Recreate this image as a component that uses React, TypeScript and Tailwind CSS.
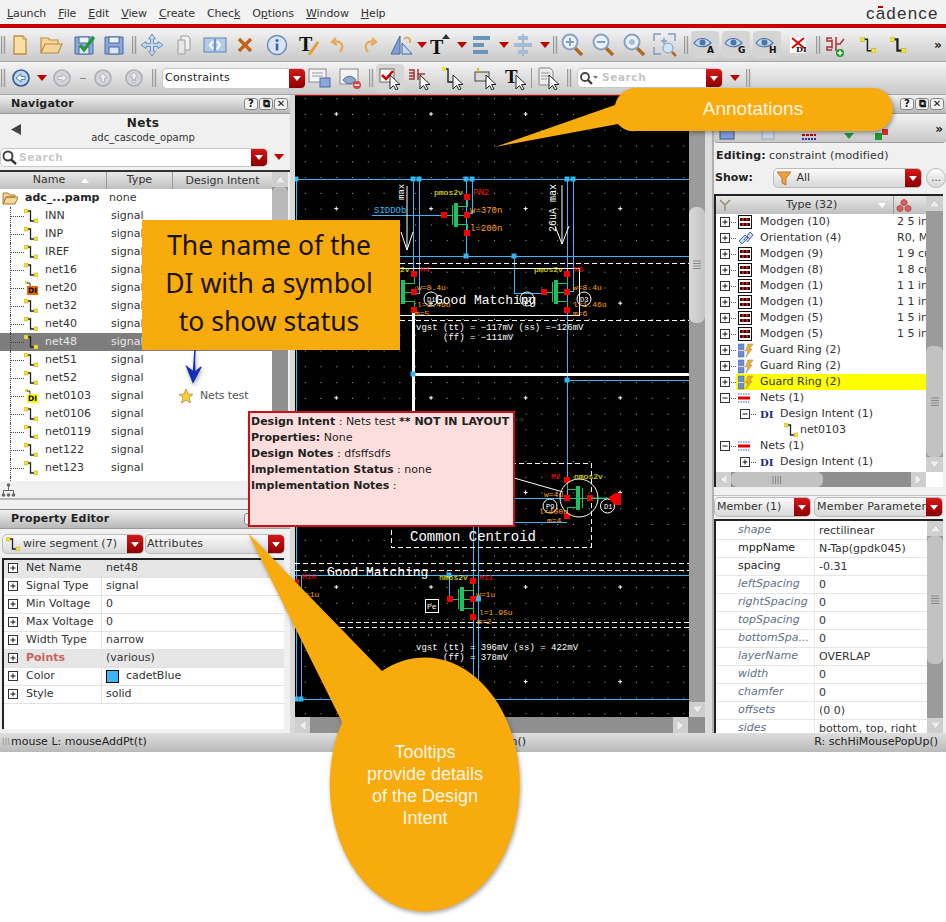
import React from "react";

const DJ = "font-['DejaVu_Sans',sans-serif]";

const Tri = ({ className = "" }: { className?: string }) => (
  <svg width="10" height="6" viewBox="0 0 10 6" className={className}><path d="M0 0H10L5 6Z" fill="#c00000" /></svg>
);

const Grip = () => (
  <svg width="6" height="20" viewBox="0 0 6 20"><path d="M0.5 1V19M3.5 1V19" stroke="#9a9a9a" strokeWidth="1.4" /></svg>
);

const Ic = ({ children }: { children: React.ReactNode }) => (
  <svg width="24" height="24" viewBox="0 0 24 24">{children}</svg>
);

const Floppy = () => (
  <>
    <path d="M3 4H21V21H3Z" fill="#8aa8dc" stroke="#4a6aa0" />
    <rect x="7" y="4" width="10" height="6" fill="#eef3fb" stroke="#4a6aa0" />
    <rect x="7" y="14" width="10" height="7" fill="#dfe7f5" stroke="#4a6aa0" />
  </>
);

const EyeI = ({ l }: { l: string }) => (
  <div className="w-[28px] h-[28px] rounded bg-[#d4d4d4] flex items-center justify-center">
    <svg width="24" height="20" viewBox="0 0 24 20">
      <path d="M1 8C5 2 13 2 18 8C13 13 5 13 1 8Z" fill="#c4d6ec" stroke="#4a76a8" strokeWidth="1.2" />
      <circle cx="9.500" cy="7.500" r="3" fill="#4a76a8" />
      <text x="14" y="18" fontSize="9" fontWeight="700" fontFamily="DejaVu Sans" fill="#111">{l}</text>
    </svg>
  </div>
);

const WireIc = ({ bold = false, size = 14 }: { bold?: boolean; size?: number }) => (
  <svg width={size} height={size} viewBox="0 0 14 14">
    <path d="M2 2H6.5V12H12" fill="none" stroke="#222" strokeWidth={bold ? 2 : 1.3} />
    <rect x="0" y="0" width="4" height="4" fill="#f0e040" stroke="#b5a820" strokeWidth=".5" />
    <rect x="10" y="10" width="4" height="4" fill="#f0e040" stroke="#b5a820" strokeWidth=".5" />
  </svg>
);

const Cursor = () => <path d="M12 9L12 23L15.5 19.5L18 24L20 23L17.5 18.5L22 18.5Z" fill="#fff" stroke="#222" />;

const Glass = ({ inner }: { inner: React.ReactNode }) => (
  <Ic>
    <path d="M15 15L22 22" stroke="#b06a20" strokeWidth="3.5" />
    <circle cx="10" cy="9" r="7.5" fill="#e8f0fa" stroke="#88a4c4" strokeWidth="2" />
    {inner}
  </Ic>
);

const items1: [number, React.ReactNode][] = [
  [4, <Grip />],
  [20, <Ic><path d="M6 3H15L18 6V21H6Z" fill="#f7dfa5" stroke="#c08a40" strokeWidth="1.3" /><path d="M15 3V6H18" fill="#fff3d0" stroke="#c08a40" /></Ic>],
  [51, <Ic><path d="M2 20V5H9L11 7H19V11H6L2 20L6 11H23L19 20Z" fill="#f3d69a" stroke="#c08a40" strokeWidth="1.2" /></Ic>],
  [84, <Ic><Floppy /><path d="M8 12L12 17L22 4" fill="none" stroke="#1d9a2e" strokeWidth="3" /></Ic>],
  [114, <Ic><Floppy /></Ic>],
  [135, <Grip />],
  [152, <Ic><path d="M12 1L15.5 6H13.5V10.5H18V8.5L23 12L18 15.5V13.5H13.5V18H15.5L12 23L8.500 18H10.5V13.5H6V15.5L1 12L6 8.500V10.500H10.5V6H8.5Z" fill="#c4d8ec" stroke="#6b94bc" /></Ic>],
  [184, <Ic><path d="M9 3H16L18 5V17H9Z" fill="#f2f2f2" stroke="#9a9a9a" /><path d="M6 7H13V21H6Z" fill="#e6e6e6" stroke="#9a9a9a" /></Ic>],
  [215, <Ic><rect x="1" y="5" width="22" height="14" fill="#b4cbe6" stroke="#5d86b4" /><path d="M10 8L7 12L10 16M14 8L17 12L14 16" fill="none" stroke="#fff" strokeWidth="2" /><path d="M12 6V18" stroke="#2f5f9a" strokeWidth="1" /></Ic>],
  [245, <Ic><path d="M6 6L18 18M18 6L6 18" stroke="#c2601c" strokeWidth="3.2" /></Ic>],
  [277, <Ic><circle cx="12" cy="12" r="9.500" fill="#d8e4f5" stroke="#6a8cc0" strokeWidth="1.5" /><circle cx="12" cy="7.500" r="1.500" fill="#3a63ad" /><path d="M12 10.500V17.500" stroke="#3a63ad" strokeWidth="2.600" /></Ic>],
  [309, <Ic><text x="2" y="18" fontFamily="Liberation Serif" fontWeight="700" fontSize="20" fill="#111">T</text><path d="M12 22L21 9" stroke="#e0a030" strokeWidth="3" /></Ic>],
  [339, <Ic><path d="M9 5L5 9L10 12M6 9C14 7 18 12 13 19" fill="none" stroke="#e8a95a" strokeWidth="2.400" /></Ic>],
  [369, <Ic><path d="M15 5L19 9L14 12M18 9C10 7 6 12 11 19" fill="none" stroke="#e8a95a" strokeWidth="2.400" /></Ic>],
  [402, <Ic><path d="M10 3V21H1Z" fill="#7f9fd8" stroke="#4a6aa0" /><path d="M12 21V10L22 21Z" fill="#c5d6ef" stroke="#4a6aa0" /><path d="M14 6C17 3 21 5 20 10" fill="none" stroke="#e8a95a" strokeWidth="2" /></Ic>],
  [422, <Tri />],
  [440, <Ic><text x="2" y="21" fontFamily="Liberation Serif" fontWeight="700" fontSize="20" fill="#111">T</text><path d="M14 6L18 1L22 6Z" fill="#333" /></Ic>],
  [462, <Tri />],
  [482, <Ic><path d="M3 5H20M3 12H14M3 19H18" stroke="#6b94bc" strokeWidth="4" /></Ic>],
  [504, <Tri />],
  [523, <Ic><path d="M12 1V23" stroke="#6b94bc" /><path d="M7 5H17M3 12H21M7 19H17" stroke="#a4bcd8" strokeWidth="4" /></Ic>],
  [545, <Tri />],
  [556, <Grip />],
  [572, <Glass inner={<path d="M6 9H14M10 5V13" stroke="#7aa0c8" strokeWidth="2" />} />],
  [603, <Glass inner={<path d="M6 9H14" stroke="#7aa0c8" strokeWidth="2" />} />],
  [634, <Glass inner={<circle cx="10" cy="9" r="3" fill="#a4c0e0" />} />],
  [665, <Ic><path d="M1 8V1H8M15 1H22V8M1 14V21H8" fill="none" stroke="#7f9fbf" strokeWidth="1.500" /><path d="M8 8H14M11 5V11" stroke="#7f9fbf" strokeWidth="1.500" /><circle cx="15" cy="15" r="5" fill="#cfe3f6" stroke="#7aa0c8" /><path d="M19 19L23 23" stroke="#b06a20" strokeWidth="2.500" /></Ic>],
  [687, <Grip />],
  [705, <EyeI l="A" />],
  [736, <EyeI l="G" />],
  [767, <EyeI l="H" />],
  [798, <svg width="16" height="16" viewBox="0 0 16 16"><rect width="16" height="16" fill="#fff" /><path d="M2 1L14 11M14 1L2 11" stroke="#e00000" strokeWidth="2" /><text x="6" y="15" fontSize="8" fontWeight="700" fontFamily="DejaVu Serif" fill="#111">DI</text></svg>],
  [819, <Grip />],
  [836, <Ic><path d="M8 5H3V8H8M8 17H3V14H8M8 6.500V15.500M12 4V18M12 11H16L20 6" fill="none" stroke="#a83030" strokeWidth="1.500" /><circle cx="16" cy="20" r="4" fill="#1d9a2e" /><path d="M13.500 20H18.500M16 17.500V22.500" stroke="#fff" strokeWidth="1.500" /></Ic>],
  [868, <WireIc size={16} />],
  [898, <WireIc size={16} bold />],
  [938, <span className="text-[12px] font-bold text-[#222] leading-none">»</span>],
];

const Back = ({ d, on }: { d: string; on?: boolean }) => (
  <Ic>
    <circle cx="12" cy="12" r="8" fill={on ? "#bcd4ee" : "#d4d4d8"} stroke={on ? "#2f5d94" : "#a8b0b8"} strokeWidth="1.6" />
    <path d={d} fill={on ? "#fff" : "#eee"} stroke={on ? "#5a84b0" : "#b8b8b8"} />
  </Ic>
);

const items2: [number, React.ReactNode][] = [
  [4, <Grip />],
  [21, <Back on d="M7 12L12 8V10.500H16V13.500H12V16Z" />],
  [42, <Tri />],
  [62, <Back d="M17 12L12 8V10.500H8V13.500H12V16Z" />],
  [83, <div className="w-[6px] h-px bg-[#888]" />],
  [103, <Back d="M12 7L16 12H13.500V16H10.500V12H8Z" />],
  [134, <Back d="M12 6L16 11H13.500V13.500H10.500V11H8ZM10.500 14.500H13.500V16.500H10.500Z" />],
  [155, <Grip />],
  [234, <div className="w-[144px] h-[21px] bg-white rounded-[5px] border border-[#c8c8c8] flex items-center justify-between overflow-hidden"><span className="pl-[2px] text-[11px] text-[#222] tracking-[.2px]">Constraints</span><DropBtn /></div>],
  [320, <Ic><rect x="1" y="3" width="17" height="13" fill="#f4f4f4" stroke="#888" /><path d="M4 7H15M4 10H15" stroke="#999" /><rect x="12" y="12" width="10" height="9" fill="#8aa8dc" stroke="#4a6aa0" /></Ic>],
  [351, <Ic><rect x="1" y="3" width="18" height="15" fill="#f4f4f4" stroke="#888" /><path d="M4 14C8 9 13 9 17 14C13 19 8 19 4 14Z" fill="#8fa8c8" stroke="#4a6aa0" /><circle cx="18" cy="19" r="4" fill="#d94040" /><path d="M15.500 19H20.500" stroke="#fff" strokeWidth="1.500" /></Ic>],
  [372, <Grip />],
  [390, <div className="w-[29px] h-[28px] rounded bg-[#d6d6d6] flex items-center justify-center"><Ic><rect x="2" y="3" width="14" height="13" fill="#fff" stroke="#666" /><path d="M4 9L8 13L15 5" fill="none" stroke="#d00000" strokeWidth="2.500" /><Cursor /></Ic></div>],
  [420, <Ic><path d="M1 4H6V7H1M1 13H6V10H1M6 5V12M10 3V14M10 8H17" fill="none" stroke="#a83030" strokeWidth="1.500" /><Cursor /></Ic>],
  [453, <Ic><path d="M3 3H7V16H12" fill="none" stroke="#222" strokeWidth="1.400" /><rect x="1" y="1" width="4" height="4" fill="#f0e040" /><Cursor /></Ic>],
  [486, <Ic><rect x="1" y="6" width="14" height="9" fill="#d8d8d8" stroke="#444" /><path d="M4 2V6" stroke="#d8c020" strokeWidth="2" /><Cursor /></Ic>],
  [516, <Ic><text x="1" y="17" fontFamily="Liberation Serif" fontWeight="700" fontSize="19" fill="#111">T</text><Cursor /></Ic>],
  [531, <div className="w-px h-[20px] bg-[#999]" />],
  [549, <Ic><path d="M2 2H13L16 5V19H2Z" fill="#ececec" stroke="#888" /><path d="M4 7H13M4 10H13M4 13H10" stroke="#999" /><Cursor /></Ic>],
  [570, <Grip />],
  [650, <div className="w-[146px] h-[20px] bg-white rounded-[5px] border border-[#c8c8c8] flex items-center overflow-hidden"><SearchGlass /><span className="text-[10.5px] font-bold tracking-[.6px] text-[#c4c4c4] flex-1">Search</span><DropBtn /></div>],
  [735, <Tri />],
  [749, <Grip />],
];

function DropBtn({ className = "w-[16px] h-full" }: { className?: string }) {
  return (
    <div className={`${className} shrink-0 rounded-r-[3px] bg-linear-to-b from-[#d81818] to-[#8c0000] flex items-center justify-center`}>
      <svg width="8" height="5" viewBox="0 0 8 5"><path d="M0 0H8L4 5Z" fill="#fff" /></svg>
    </div>
  );
}

function SearchGlass() {
  return (
    <svg width="22" height="15" viewBox="0 0 22 15" className="shrink-0 mr-[2px]">
      <circle cx="7" cy="6" r="4" fill="#fff" stroke="#444" strokeWidth="1.800" />
      <path d="M10 9L14 13" stroke="#333" strokeWidth="2.200" />
      <path d="M15 5H20L17.500 8Z" fill="#777" />
    </svg>
  );
}

function ToolRow({ items, h }: { items: [number, React.ReactNode][]; h: string }) {
  let right = 0;
  return (
    <div className={`${h} flex items-center bg-linear-to-b from-[#f4f4f4] to-[#c9c9c9] border-b border-[#a8a8a8]`}>
      {items.map(([c, el], i) => {
        const slot = c === 234 ? 146 : c === 650 ? 148 : 28;
        const left = c - slot / 2 - right;
        right = c + slot / 2;
        return (
          <div key={i} className="flex items-center justify-center shrink-0" style={{ width: slot, marginLeft: left }}>
            {el}
          </div>
        );
      })}
    </div>
  );
}

const MENUS: React.ReactNode[] = [
  <><u>L</u>aunch</>,
  <><u>F</u>ile</>,
  <><u>E</u>dit</>,
  <><u>V</u>iew</>,
  <><u>C</u>reate</>,
  <>Chec<u>k</u></>,
  <>O<u>p</u>tions</>,
  <><u>W</u>indow</>,
  <><u>H</u>elp</>,
];

const DockBtns = () => (
  <div className="flex gap-[1px]">
    {["?", "⧉", "✕"].map((c) => (
      <span key={c} className="w-[14px] h-[12px] rounded-[3px] border border-[#888] bg-[#f2f2f2] text-[10px] leading-[10px] font-bold text-center text-[#111]">{c}</span>
    ))}
  </div>
);

const Header = ({ title }: { title?: string }) => (
  <div className="h-[19px] flex items-center justify-between pl-[11px] pr-[2px] bg-linear-to-b from-[#f0f0f0] to-[#b8b8b8] border-b border-[#999] shrink-0">
    <span className="text-[11px] font-bold text-[#222] tracking-[.2px] pt-[1px]">{title}</span>
    <DockBtns />
  </div>
);

const NET_ROWS = ["INN","INP","IREF","net16","net20","net32","net40","net48","net51","net52","net0103","net0106","net0119","net122","net123"];

const DI = ({ color }: { color: string }) => (
  <span className={`${color} w-[11px] h-[9px] text-[7.5px] leading-[9px] font-bold text-center text-black absolute left-[3px] top-[5px]`}>DI</span>
);

const NetRow = ({ n }: { n: string }) => {
  const sel = n === "net48";
  return (
    <div className={`h-[18px] flex items-center ${sel ? "bg-[#7d7d7d] text-[#e8e8e8]" : "text-[#333]"}`}>
      <div className="ml-[10px] w-[14px] h-full border-l border-dotted border-[#444] flex items-center shrink-0">
        <div className="w-full border-t border-dotted border-[#444]" />
      </div>
      <div className="relative w-[14px] h-[14px] mr-[7px] shrink-0">
        {n === "net20" || n === "net0103" ? (
          <>
            <svg width="14" height="14" viewBox="0 0 14 14"><rect x="1" y="0" width="3" height="3" fill="#e6d840" /><path d="M3 2H6V6" stroke="#333" fill="none" /></svg>
            <DI color={n === "net20" ? "bg-[#ef6c00]" : "bg-[#ffff00]"} />
          </>
        ) : (
          <WireIc />
        )}
      </div>
      <span className="w-[66px] shrink-0">{n}</span>
      <span className="w-[62px] shrink-0">signal</span>
      {n === "net0103" && (
        <span className="flex items-center gap-[6px] ml-[5px]">
          <svg width="16" height="16" viewBox="0 0 16 16"><path d="M8 1L10 6L15 6.500L11 9.500L12.500 15L8 12L3.500 15L5 9.500L1 6.500L6 6Z" fill="#f8cf3a" stroke="#c89a4a" /></svg>
          <span className="text-[#555] tracking-[-.15px]">Nets test</span>
        </span>
      )}
    </div>
  );
};

const Plus = ({ minus = false }: { minus?: boolean }) => (
  <svg width="11" height="11" viewBox="0 0 11 11" className="shrink-0">
    <rect x=".5" y=".5" width="9" height="9" fill="#fff" stroke="#333" />
    <path d={minus ? "M2.500 5H7.500" : "M2.500 5H7.500M5 2.500V7.500"} stroke="#111" />
  </svg>
);

const Combo = ({ className, children }: { className: string; children: React.ReactNode }) => (
  <div className={`${className} h-[20px] rounded-[5px] border border-[#bbb] bg-linear-to-b from-[#fafafa] to-[#d8d8d8] flex items-center overflow-hidden text-[11px] text-[#333]`}>
    <div className="flex-1 min-w-0 flex items-center overflow-hidden whitespace-nowrap">{children}</div>
    <DropBtn />
  </div>
);

const PE_ROWS: [string, string][] = [
  ["Net Name", "net48"], ["Signal Type", "signal"], ["Min Voltage", "0"], ["Max Voltage", "0"],
  ["Width Type", "narrow"], ["Points", "(various)"], ["Color", "cadetBlue"], ["Style", "solid"],
];

function ScrollBtn({ up }: { up?: boolean }) {
  return (
    <div className="h-[15px] bg-[#cfcfcf] flex items-center justify-center shrink-0">
      <svg width="11" height="7" viewBox="0 0 11 7"><path d={up ? "M0 7H11L5.500 0Z" : "M0 0H11L5.500 7Z"} fill="#ececec" stroke="#aaa" strokeWidth=".5" /></svg>
    </div>
  );
}

const Grips = ({ v = false }: { v?: boolean }) => (
  <svg width="10" height="10" viewBox="0 0 10 10"><path d={v ? "M1 1V9M3.500 1V9M6 1V9M8.500 1V9" : "M1 1H9M1 3.500H9M1 6H9M1 8.500H9"} stroke="#8a8a8a" /></svg>
);

function LeftPanel() {
  return (
    <div className="w-[290px] h-full flex flex-col bg-[#f0f0f0] shrink-0">
      <Header title="Navigator" />
      <div className="relative h-[33px] shrink-0 flex flex-col items-center justify-start pr-[4px] pt-[2px]">
        <span className="text-[12px] font-bold leading-[15px] text-[#222] tracking-[.3px]">Nets</span>
        <span className="text-[10px] leading-[13px] text-[#333]">adc_cascode_opamp</span>
        <svg width="10" height="11" viewBox="0 0 10 11" className="absolute left-[11px] top-[10px]"><path d="M10 0V11L0 5.500Z" fill="#444" /></svg>
      </div>
      <div className="h-[23px] shrink-0 flex items-start gap-[6px] pt-[1px]">
        <div className="w-[268px] h-[19px] bg-white rounded-[5px] border border-[#c8c8c8] flex items-center overflow-hidden">
          <svg width="17" height="15" viewBox="0 0 17 15" className="shrink-0"><circle cx="7" cy="6" r="4.500" fill="#fff" stroke="#444" strokeWidth="2" /><path d="M10 9.500L15 14" stroke="#333" strokeWidth="2.400" /></svg>
          <span className="text-[10.5px] font-bold tracking-[.6px] text-[#c8c8c8] flex-1 pl-[1px]">Search</span>
          <DropBtn />
        </div>
        <Tri className="mt-[6px]" />
      </div>
      <div className="flex h-[311px] shrink-0 border-t-2 border-[#333]">
        <div className="w-[272px] flex flex-col bg-white text-[11px]">
          <div className="h-[17px] shrink-0 flex items-center bg-linear-to-b from-[#e8e8e8] to-[#c0c0c0] text-[#333]">
            <div className="w-[107px] flex items-center justify-center gap-[16px] pl-[16px] pb-[1px] border-r border-[#999] h-full"><span>Name</span><svg width="8" height="5" viewBox="0 0 8 5"><path d="M0 5H8L4 0Z" fill="#fff" /></svg></div>
            <div className="w-[66px] text-center border-r border-[#999] h-full leading-[15px]">Type</div>
            <div className="flex-1 text-center leading-[15px]">Design Intent</div>
          </div>
          <div className="h-[18px] shrink-0 flex items-center">
            <svg width="16" height="14" viewBox="0 0 16 14" className="ml-[2px] mr-[7px]"><path d="M1 13V2H6L7.500 4H13V6H4L1 13L4 6H16L13 13Z" fill="#f3d69a" stroke="#b5772c" /></svg>
            <span className="font-bold text-[#222] w-[84px]">adc_...pamp</span>
            <span className="text-[#333]">none</span>
          </div>
          <div className="flex-1 overflow-hidden">
            {NET_ROWS.map((n) => <NetRow key={n} n={n} />)}
            <div className="h-[18px] ml-[10px] border-l border-dotted border-[#444]" />
          </div>
        </div>
        <div className="w-[16px] flex flex-col bg-[#8f8f8f]">
          <ScrollBtn up />
          <div className="h-[80px] rounded-[5px] bg-[#b9b9b9]" />
        </div>
      </div>
      <div className="h-[19px] shrink-0 flex items-center pl-[1px] border-b-2 border-[#b8b8b8]">
        <svg width="15" height="14" viewBox="0 0 15 14"><circle cx="7.500" cy="2" r="1.800" fill="#666" /><path d="M7.500 3V8M2.500 11V7.500H12.500V11" fill="none" stroke="#666" /><circle cx="2.500" cy="12" r="1.800" fill="#666" /><circle cx="7.500" cy="12" r="1.800" fill="#666" /><circle cx="12.500" cy="12" r="1.800" fill="#666" /></svg>
      </div>
      <div className="h-[10px] shrink-0 border-b border-[#888]" />
      <Header title="Property Editor" />
      <div className="h-[27px] shrink-0 flex items-center gap-[1px] pl-[2px] pt-[3px]">
        <Combo className="w-[142px]"><span className="pl-[3px] pr-[3px] shrink-0"><WireIc /></span><span>wire segment (7)</span></Combo>
        <Combo className="w-[140px]"><span className="pl-[1px] tracking-[.2px]">Attributes</span></Combo>
      </div>
      <div className="ml-[2px] mr-[6px] mt-[2px] h-[171px] shrink-0 border-t-2 border-l-2 border-[#222] bg-white text-[11px] text-[#333]">
        {PE_ROWS.map(([k, v]) => (
          <div key={k} className={`h-[18px] flex items-center border-b border-[#e2e2e2] ${k === "Net Name" || k === "Points" ? "bg-[#e6e6e6]" : ""}`}>
            <span className="w-[22px] pl-[4px] shrink-0"><Plus /></span>
            <span className={`w-[75px] shrink-0 ${k === "Points" ? "font-bold text-[#c8625a]" : ""}`}>{k}</span>
            <span className="h-full border-l border-[#e2e2e2] pl-[4px] flex items-center gap-[7px]">
              {k === "Color" && <span className="w-[13px] h-[13px] bg-[#38b8f8] border border-black" />}
              {v}
            </span>
          </div>
        ))}
      </div>
    </div>
  );
}

const Node = ({ x, y, c = "red" }: { x: number; y: number; c?: string }) =>
  c === "red" ? <rect x={x - 3} y={y - 3} width="6" height="6" fill="#f00000" /> : <rect x={x - 2.500} y={y - 2.500} width="5" height="5" fill="#38b4f0" />;

const Mos = ({ cx, cy, flip = false, gate = true }: { cx: number; cy: number; flip?: boolean; gate?: boolean }) => {
  const s = flip ? -1 : 1;
  const X = (d: number) => cx + s * d;
  return (
    <g shapeRendering="crispEdges">
      <path d={`M${X(-23)} ${cy}H${X(-15)}M${X(-15)} ${cy - 10}V${cy + 10}M${X(-9)} ${cy}H${cx}M${X(-9)} ${cy - 9}H${cx}V${cy - 18}M${X(-9)} ${cy + 9}H${cx}V${cy + 18}`} stroke="#1fc060" strokeWidth="1" fill="none" />
      <rect x={Math.min(X(-13), X(-9))} y={cy - 12} width="4" height="24" fill="#1fc060" />
      <Node x={cx} y={cy - 18} />
      <Node x={cx} y={cy} />
      <Node x={cx} y={cy + 18} />
      {gate && <Node x={X(-23)} y={cy} />}
    </g>
  );
};

const T = ({ x, y, c = "#ffa020", s = 8, children, w = 400 }: { x: number; y: number; c?: string; s?: number; children: React.ReactNode; w?: number }) => (
  <text x={x} y={y} fill={c} fontSize={s} fontWeight={w} fontFamily="Liberation Mono, monospace">{children}</text>
);

function Schematic() {
  const blue = "#38b8f8";
  const crossX = [336.3, 431, 525.6, 620.2];
  const crossY = [114, 208.600, 303.200, 397.800, 492.400, 587, 681.600];
  return (
    <svg viewBox="295 96 394 621" width="394" height="621" className="block">
      <defs>
        <pattern id="dots" x="336.3" y="114" width="15.77" height="15.77" patternUnits="userSpaceOnUse">
          <rect x="0" y="0" width="1" height="1" fill="#b0b0b0" />
        </pattern>
      </defs>
      <rect x="295" y="96" width="394" height="621" fill="#000" />
      <rect x="295" y="96" width="394" height="621" fill="url(#dots)" />
      {crossX.map((x) => crossY.map((y) => <path key={`${x}${y}`} d={`M${x - 2} ${y}H${x + 2}M${x} ${y - 2}V${y + 2}`} stroke="#fff" />))}

      <g shapeRendering="crispEdges">
        <path d="M295 179H689M296 179V700M413 179V275M419 179V293H414M466 179V256M472 179V213H468M567 179V500M573 179V291H568M400 256H689M514 256V293H544M567 380H689M295 575H689M301 575V699M295 699H689M473 411V690M478 411V690M449 575V599M514 498H612M514 522H567M372 215H443" fill="none" stroke={blue} strokeWidth="1" />
        <path d="M400 263H689M400 320H689M295 563H689M295 570H689M340 622H689M340 627H689" stroke="#fff" strokeDasharray="5 3" fill="none" />
        <path d="M400 268H579V315H400" stroke="#fff" fill="none" />
        <path d="M413 312V411M413 374.500H689" stroke="#fff" strokeWidth="3" fill="none" />
        <rect x="391" y="463" width="200" height="84" fill="none" stroke="#fff" strokeDasharray="5 3" />
      </g>
      <path d="M514 478L563 492" stroke="#fff" />

      {[[296,179],[413,179],[419,179],[466,179],[472,179],[567,179],[573,179],[466,256],[514,256],[413,374],[567,380],[449,575],[296,699],[301,699],[478.500,599]].map(([x,y]) => <Node key={`${x}-${y}`} x={x} y={y} c="blue" />)}

      <Mos cx={467} cy={215} />
      <Mos cx={414} cy={292} />
      <Mos cx={567} cy={292} />
      <Mos cx={567} cy={498} flip />
      <Mos cx={473} cy={599} />
      <Node x={296} y={582} />
      <circle cx="579" cy="498" r="19" fill="none" stroke="#fff" />
      <circle cx="607.500" cy="506" r="7" fill="none" stroke="#fff" />
      <circle cx="550" cy="506" r="7" fill="none" stroke="#fff" />
      <circle cx="431" cy="299" r="7" fill="none" stroke="#fff" />
      <circle cx="527" cy="299" r="7" fill="none" stroke="#fff" />
      <circle cx="584" cy="299" r="7" fill="none" stroke="#fff" />
      <path d="M608 498L615 493H621V505H615Z" fill="#f00000" />
      <path d="M591 498H608" stroke="#1fc060" />
      <T x={546} y={509} c="#fff" s={7}>P9</T>
      <T x={604} y={509} c="#fff" s={7}>D1</T>
      <T x={427} y={302} c="#fff" s={7}>D1</T>
      <T x={523} y={302} c="#fff" s={7}>D2</T>
      <T x={580} y={302} c="#fff" s={7}>D3</T>

      <path d="M407 186V250M401 232L407 250L413 232M562 185V244M555 226L562 244L569 226" fill="none" stroke="#fff" />
      <text x="0" y="0" transform="translate(404 200) rotate(-90)" fill="#fff" fontSize="9" fontFamily="Liberation Mono, monospace">max</text>
      <text x="0" y="0" transform="translate(556 232) rotate(-90)" fill="#fff" fontSize="10" fontFamily="Liberation Mono, monospace">26uA max</text>

      <T x={374} y={213} c={blue} s={9}>SIDDOb</T>
      <T x={434} y={195} c="#ffff00">pmos2v</T>
      <T x={473} y={195} c="#ff1010" s={9}>PN2</T>
      <T x={470} y={213} s={9}>w=370n</T>
      <T x={470} y={231} s={9}>l=200n</T>
      <T x={400} y={272} c="#ffff00">2v</T>
      <T x={420} y={272} c="#ff1010">M4</T>
      <T x={417} y={290}>w=8.4u</T>
      <T x={417} y={307}>l=1.46u</T>
      <T x={415} y={316}>m=5</T>
      <T x={534} y={272} c="#ffff00">pmos2v</T>
      <T x={574} y={272} c="#ff1010">M5</T>
      <T x={573} y={290}>w=8.4u</T>
      <T x={573} y={307}>l=1.46u</T>
      <T x={573} y={316}>m=6</T>
      <T x={551} y={479} c="#ff1010">M2</T>
      <T x={574} y={479} c="#ffff00">nmos2v</T>
      <T x={544} y={497}>w=4u</T>
      <T x={539} y={514}>l=400n</T>
      <T x={547} y={523}>m=4</T>
      <T x={439} y={580} c="#ffff00">nmos2v</T>
      <T x={479} y={580} c="#ff1010">M11</T>
      <T x={476} y={597}>w=1u</T>
      <T x={479} y={615}>l=1.95u</T>
      <T x={477} y={624}>m=2</T>
      <T x={302} y={579} c="#ff1010">M10</T>
      <T x={305} y={597}>=1u</T>

      <T x={435} y={304} c="#fff" s={13}>Good Matching</T>
      <T x={410} y={541} c="#fff" s={14}>Common Centroid</T>
      <T x={327} y={576} c="#fff" s={13}>Good Matching</T>
      <T x={416} y={330} c="#fff" s={9}>vgst (tt) = −117mV (ss) =−126mV</T>
      <T x={443} y={340} c="#fff" s={9}>(ff) = −111mV</T>
      <T x={416} y={650} c="#fff" s={9}>vgst (tt) = 396mV (ss) = 422mV</T>
      <T x={443} y={660} c="#fff" s={9}>(ff) = 378mV</T>
      <rect x="425.500" y="599.500" width="13" height="13" fill="none" stroke="#fff" />
      <T x={427} y={609} c="#fff" s={8}>Pe</T>
    </svg>
  );
}

function CanvasArea() {
  return (
    <div className="w-[410px] h-full shrink-0 flex flex-col">
      <div className="h-[1px] bg-[#c00000] shrink-0" />
      <div className="flex-1 flex min-h-0">
        <Schematic />
        <div className="w-[16px] flex flex-col bg-[#9b9b9b]">
          <div className="h-[111px] shrink-0" />
          <div className="h-[116px] rounded-[7px] bg-linear-to-r from-[#d8d8d8] to-[#c4c4c4] flex items-center justify-center shrink-0"><Grips /></div>
          <div className="flex-1" />
          <ScrollBtn />
        </div>
      </div>
      <div className="h-[16px] shrink-0 flex bg-[#8f8f8f]">
        <div className="w-[15px] bg-[#cfcfcf] flex items-center justify-center"><svg width="7" height="11" viewBox="0 0 7 11"><path d="M7 0V11L0 5.500Z" fill="#eee" stroke="#aaa" strokeWidth=".5" /></svg></div>
        <div className="flex-1" />
        <div className="w-[15px] mr-[17px] bg-[#cfcfcf] flex items-center justify-center"><svg width="7" height="11" viewBox="0 0 7 11"><path d="M0 0V11L7 5.500Z" fill="#eee" stroke="#aaa" strokeWidth=".5" /></svg></div>
      </div>
    </div>
  );
}

const MG = () => (
  <svg width="14" height="14" viewBox="0 0 14 14" className="shrink-0" shapeRendering="crispEdges">
    <rect x=".5" y=".5" width="13" height="13" fill="#fff" stroke="#111" />
    <rect x="2" y="3" width="10" height="3" fill="#111" />
    <rect x="2" y="8" width="10" height="3" fill="#111" />
    <rect x="4" y="3" width="2" height="3" fill="#e01010" />
    <rect x="8" y="3" width="2" height="3" fill="#e01010" />
    <rect x="4" y="8" width="2" height="3" fill="#e01010" />
    <rect x="8" y="8" width="2" height="3" fill="#e01010" />
  </svg>
);
const Orient = () => (
  <svg width="16" height="14" viewBox="0 0 16 14" className="shrink-0"><path d="M1 10L7 4L10 7L4 13ZM6 9L12 1L15 4L9 11" fill="#c8d8f0" stroke="#4468b8" /><path d="M9 5L12 8" stroke="#d03030" /></svg>
);
const GR = () => (
  <svg width="15" height="15" viewBox="0 0 15 15" className="shrink-0"><rect x="0" y="1" width="6" height="13" fill="#6f8ecb" stroke="#3c5a9a" strokeWidth=".5" /><path d="M0 7.500H6" stroke="#dde" /><path d="M10 1H15L11.500 6H14L8 14L10 8H7.500Z" fill="#e8b040" stroke="#a87820" strokeWidth=".5" /></svg>
);
const NetsI = ({ c }: { c: string }) => (
  <svg width="12" height="10" viewBox="0 0 12 10" className="shrink-0"><path d="M0 1H12M0 9H12" stroke="#3050d0" strokeDasharray="1.500 1" /><rect y="3.500" width="12" height="3" fill={c} /></svg>
);
const DII = () => <span className="font-['DejaVu_Serif',serif] font-bold text-[10px] text-[#1c2a80] w-[14px] shrink-0">DI</span>;

const TREE: { icon: React.ReactNode; t: string; v?: string; sel?: boolean; indent?: number; minus?: boolean; noPlus?: boolean }[] = [
  { icon: <MG />, t: "Modgen (10)", v: "2 5 int" },
  { icon: <Orient />, t: "Orientation (4)", v: "R0, M" },
  { icon: <MG />, t: "Modgen (9)", v: "1 9 cu" },
  { icon: <MG />, t: "Modgen (8)", v: "1 8 cu" },
  { icon: <MG />, t: "Modgen (1)", v: "1 1 int" },
  { icon: <MG />, t: "Modgen (1)", v: "1 1 int" },
  { icon: <MG />, t: "Modgen (5)", v: "1 5 int" },
  { icon: <MG />, t: "Modgen (5)", v: "1 5 int" },
  { icon: <GR />, t: "Guard Ring (2)" },
  { icon: <GR />, t: "Guard Ring (2)" },
  { icon: <GR />, t: "Guard Ring (2)", sel: true },
  { icon: <NetsI c="#e00000" />, t: "Nets (1)", minus: true },
  { icon: <DII />, t: "Design Intent (1)", indent: 1, minus: true },
  { icon: <WireIc />, t: "net0103", indent: 2, noPlus: true },
  { icon: <NetsI c="#e00000" />, t: "Nets (1)", minus: true },
  { icon: <DII />, t: "Design Intent (1)", indent: 1 },
];

const MP: [string, string, boolean][] = [
  ["shape", "rectilinear", true], ["mppName", "N-Tap(gpdk045)", false], ["spacing", "-0.31", false],
  ["leftSpacing", "0", true], ["rightSpacing", "0", true], ["topSpacing", "0", true], ["bottomSpa...", "0", true],
  ["layerName", "OVERLAP", true], ["width", "0", true], ["chamfer", "0", true], ["offsets", "(0 0)", true], ["sides", "bottom, top, right", true],
];

function RightPanel() {
  return (
    <div className="w-[234px] h-full shrink-0 flex flex-col border-l-2 border-[#b0b0b0] ml-[-2px] bg-[#f0f0f0] relative">
      <Header />
      <div className="h-[29px] shrink-0 flex items-center bg-linear-to-b from-[#f2f2f2] to-[#c8c8c8] border-b border-[#a0a0a0] rounded-b-[4px] relative">
        <svg width="226" height="29" viewBox="0 0 226 29" className="absolute left-0 top-0">
          <rect x="6" y="15" width="14" height="10" fill="#7f9fd8" stroke="#33558f" />
          <rect x="48" y="16" width="12" height="9" fill="#c8d6ea" stroke="#9ab" />
          <path d="M88 21H102" stroke="#c00000" strokeWidth="2" strokeDasharray="3 1" />
          <path d="M88 25H102" stroke="#3030c0" strokeWidth="2" strokeDasharray="2 1" />
          <path d="M130 19H140L135 25Z" fill="#1d9a2e" />
          <rect x="161" y="19" width="7" height="7" fill="#1d9a2e" />
          <rect x="168" y="15" width="6" height="6" fill="#d03030" />
        </svg>
        <span className="absolute right-[3px] top-[9px] text-[12px] font-bold leading-none text-[#222]">»</span>
      </div>
      <div className="h-[23px] shrink-0 flex items-end pl-[2px] text-[11px] text-[#333] tracking-[.2px] pb-[2px]"><b className="mr-[3px] text-[#222]">Editing:</b> constraint (modified)</div>
      <div className="h-[24px] shrink-0 flex items-center pl-[1px] text-[11px]">
        <b className="w-[59px] text-[#222]">Show:</b>
        <Combo className="w-[150px]">
          <svg width="14" height="15" viewBox="0 0 14 15" className="mx-[3px] shrink-0"><path d="M0 1H14L9 7V14L5 12V7Z" fill="#f0a040" stroke="#c07828" /></svg>
          <span className="pl-[2px]">All</span>
        </Combo>
        <span className="ml-[4px] w-[20px] h-[20px] rounded-full border border-[#bbb] bg-linear-to-b from-[#fafafa] to-[#d8d8d8] text-[10px] leading-[18px] text-center text-[#444]">...</span>
      </div>
      <div className="mr-[3px] mt-[4px] h-[293px] shrink-0 border-t-2 border-l-2 border-[#222] flex flex-col bg-white">
        <div className="flex flex-1 min-h-0">
          <div className="w-[210px] flex flex-col overflow-hidden text-[11px] text-[#333]">
            <div className="h-[18px] shrink-0 flex items-center bg-linear-to-b from-[#e8e8e8] to-[#c0c0c0]">
              <div className="w-[178px] h-full flex items-center border-r border-[#999] relative">
                <svg width="12" height="12" viewBox="0 0 12 12" className="absolute left-[3px] top-[3px]"><path d="M1 1L6 6L11 1M6 6V12" fill="none" stroke="#9a8a68" strokeWidth="1.500" /></svg>
                <span className="absolute left-[70px]">Type (32)</span>
                <svg width="8" height="5" viewBox="0 0 8 5" className="absolute right-[7px] top-[7px]"><path d="M0 0H8L4 5Z" fill="#fff" /></svg>
              </div>
              <svg width="16" height="14" viewBox="0 0 16 14" className="ml-[2px]"><path d="M8 1L11 3V6L8 8L5 6V3ZM4 7L7 9V12L4 14L1 12V9ZM12 7L15 9V12L12 14L9 12V9Z" fill="#d06060" stroke="#a83838" strokeWidth=".6" /></svg>
            </div>
            {TREE.map((r, i) => (
              <div key={i} className="h-[16px] shrink-0 flex items-center relative">
                <div className="w-[4px] shrink-0" />
                {r.indent === 2 ? <div className="w-[62px] shrink-0" /> : r.indent === 1 ? (
                  <div className="w-[20px] shrink-0" />
                ) : null}
                {!r.noPlus && <Plus minus={r.minus} />}
                {r.noPlus ? null : <div className="w-[5px] border-t border-dotted border-[#555] shrink-0" />}
                <div className={`flex-1 flex items-center h-full min-w-0 ${r.sel ? "bg-[#ffff00]" : ""}`}>
                  <span className={`flex items-center h-full shrink-0 ${r.indent === 1 ? "w-[24px] pl-[4px]" : r.indent === 2 ? "w-[18px] pl-[2px]" : "w-[24px] pl-[2px]"}`}>{r.icon}</span>
                  <span className="whitespace-nowrap w-[137px] shrink-0">{r.t}</span>
                  {r.v && <span className="whitespace-nowrap">{r.v}</span>}
                </div>
              </div>
            ))}
          </div>
          <div className="w-[17px] flex flex-col bg-[#9b9b9b] shrink-0">
            <ScrollBtn up />
            <div className="h-[135px] shrink-0" />
            <div className="flex-1 rounded-[6px] bg-[#c2c2c2] flex items-center justify-center"><Grips /></div>
            <ScrollBtn />
          </div>
        </div>
        <div className="h-[15px] shrink-0 flex bg-[#8f8f8f] w-[210px]">
          <div className="w-[15px] bg-[#cfcfcf] flex items-center justify-center"><svg width="7" height="11" viewBox="0 0 7 11"><path d="M7 0V11L0 5.500Z" fill="#eee" stroke="#aaa" strokeWidth=".5" /></svg></div>
          <div className="w-[92px] rounded-[6px] bg-[#c2c2c2] flex items-center justify-center"><Grips v /></div>
          <div className="flex-1" />
          <div className="w-[15px] bg-[#cfcfcf] flex items-center justify-center"><svg width="7" height="11" viewBox="0 0 7 11"><path d="M0 0V11L7 5.500Z" fill="#eee" stroke="#aaa" strokeWidth=".5" /></svg></div>
        </div>
      </div>
      <div className="h-[9px] shrink-0 border-b border-[#c0c0c0]" />
      <div className="flex gap-[3px] shrink-0 mt-[1px]">
        <Combo className="w-[97px]"><span className="pl-[2px]">Member (1)</span></Combo>
        <Combo className="w-[129px]"><span className="pl-[2px] tracking-[.2px]">Member Parameters</span></Combo>
      </div>
      <div className="mr-[3px] mt-[2px] flex-1 min-h-0 border-t-2 border-l-2 border-[#222] bg-white flex text-[11px] text-[#333] overflow-hidden">
        <div className="w-[211px] shrink-0 pt-[1px]">
          {MP.map(([k, v, it]) => (
            <div key={k} className="h-[18px] flex items-center border-b border-[#e6e6e6]">
              <span className={`pl-[22px] w-[98px] shrink-0 whitespace-nowrap overflow-hidden ${it ? "italic text-[#5c7088]" : "text-[#222]"}`}>{k}</span>
              <span className="h-full border-l border-[#e6e6e6] pl-[4px] leading-[18px] whitespace-nowrap">{v}</span>
            </div>
          ))}
        </div>
        <div className="w-[16px] flex flex-col bg-[#9b9b9b] shrink-0">
          <ScrollBtn up />
          <div className="h-[128px] shrink-0 rounded-[6px] bg-[#c2c2c2] flex items-center justify-center"><Grips /></div>
          <div className="flex-1" />
          <ScrollBtn />
        </div>
      </div>
    </div>
  );
}

function Overlays() {
  const o = "#f7ab0c";
  return (
    <>
      <svg width="946" height="922" viewBox="0 0 946 922" className="absolute left-0 top-0 pointer-events-none drop-shadow-[1px_2px_2px_rgba(0,0,0,0.35)]">
        <path d="M636 88H873A20 21.500 0 0 1 873 131H636A20 20 0 0 1 618 124L495 147L615 105A21 21 0 0 1 636 88Z" fill={o} />
        <path d="M248 533L382 671A95 127 0 1 1 342 722Z" fill={o} />
        <path d="M195 350L193.500 372L187 367L193 382L201 367L195.500 372" fill="#1030b0" stroke="#1030b0" strokeWidth="1.500" />
      </svg>
      <div className="absolute left-[616px] top-[88px] w-[274px] h-[43px] flex items-center justify-center font-['Liberation_Sans',sans-serif] text-[19px] text-[#fff4e0]">Annotations</div>
      <div className="absolute left-[330px] top-[741px] w-[190px] text-center font-['Liberation_Sans',sans-serif] text-[18px] leading-[22px] text-[#fff6e6]">Tooltips<br />provide details<br />of the Design<br />Intent</div>
      <div className="absolute left-[142px] top-[220px] w-[258px] h-[130px] bg-[#f7ab0c] flex items-center justify-center text-center font-['Noto_Sans',sans-serif] text-[26.500px] leading-[38px] text-[#1a1205] pb-[4px] pr-[4px]">
        <div>The name of the<br />DI with a symbol<br />to show status</div>
      </div>
      <div className={`absolute left-[248px] top-[411px] w-[267px] h-[116px] bg-[#fddede] border-2 border-[#c8101a] pl-[1px] pt-[1px] text-[11px] leading-[16px] text-[#222] whitespace-nowrap ${DJ}`}>
        <div><b>Design Intent</b> : Nets test <b>** NOT IN LAYOUT **</b></div>
        <div><b>Properties:</b> None</div>
        <div><b>Design Notes</b> : dfsffsdfs</div>
        <div><b>Implementation Status</b> : none</div>
        <div><b>Implementation Notes</b> :</div>
      </div>
    </>
  );
}

export default function App() {
  return (
    <div className={`relative w-[946px] h-[922px] bg-white overflow-hidden ${DJ}`}>
      <div className="h-[24px] bg-[#f2f2f2] flex items-center pl-[7px] pt-[4px] text-[11px] text-[#333] relative">
        <div className="flex gap-[12px] tracking-[-.1px]">
          {MENUS.map((m, i) => <span key={i}>{m}</span>)}
        </div>
        <span className="absolute left-[866px] top-[3px] font-['Liberation_Sans',sans-serif] text-[17px] leading-[22px] tracking-[1.200px] text-[#333]">cadence</span>
        <span className="absolute left-[878px] top-[6px] w-[5px] h-[1.500px] bg-[#c00000]" />
      </div>
      <div className="h-[4px] bg-[#cc0000]" />
      <ToolRow items={items1} h="h-[34px]" />
      <ToolRow items={items2} h="h-[33px]" />
      <div className="h-[638px] flex overflow-hidden">
        <LeftPanel />
        <div className="w-[5px] bg-[#d8d8d8] shrink-0" />
        <CanvasArea />
        <div className="w-[9px] bg-[#dcdcdc] shrink-0" />
        <RightPanel />
      </div>
      <div className="h-[19px] bg-linear-to-b from-[#dedede] to-[#b9b9b9] flex items-center text-[11px] text-[#222] relative">
        <span className="text-[#999] pl-[2px] text-[9px] leading-none">III</span>
        <span className="pl-[1px]">mouse L: mouseAddPt(t)</span>
        <span className="absolute right-[420px] whitespace-nowrap">M: schHiMouseMoveOrigin()</span>
        <span className="absolute right-[8px]">R: schHiMousePopUp()</span>
      </div>
      <Overlays />
    </div>
  );
}
